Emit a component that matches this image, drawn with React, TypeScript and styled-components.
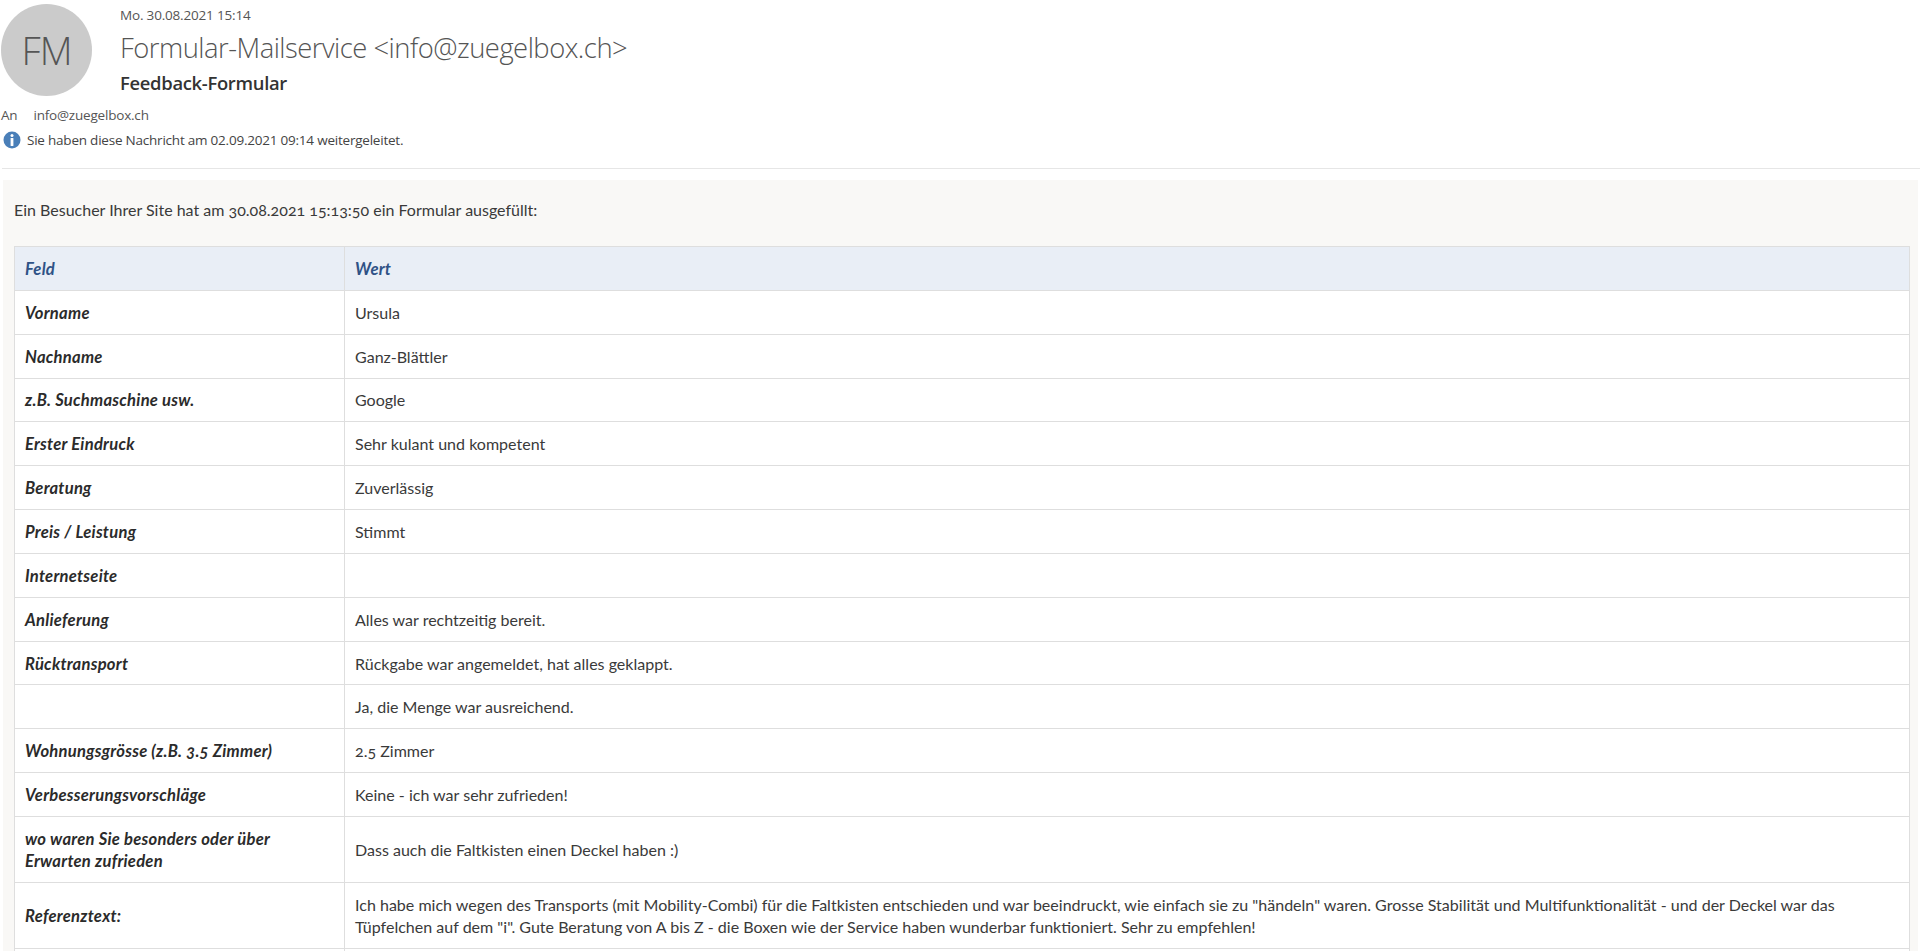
import React from "react";
import styled, { createGlobalStyle } from "styled-components";

const Global = createGlobalStyle`
  html, body { margin: 0; padding: 0; height: 100%; overflow: hidden; background: #fff; }
  #root { height: 100%; }
`;

const Page = styled.div`
  height: 951px;
  overflow: hidden;
  font-family: "Lato", "Open Sans", sans-serif;
  color: #3a3a3a;
  background: #fff;
`;

const Header = styled.header`
  display: flex;
  gap: 28px;
  padding: 4px 0 0 1px;
  height: 96px;
  box-sizing: border-box;
`;

const Avatar = styled.div`
  width: 91px;
  height: 92px;
  border-radius: 50%;
  background: #cbcbcb;
  color: #555;
  display: flex;
  align-items: center;
  justify-content: center;
  font: 300 38px "Open Sans", sans-serif;
  letter-spacing: -1px;
`;

const HeaderText = styled.div`
  display: flex;
  flex-direction: column;
`;

const DateLine = styled.div`
  font: 400 13.5px/22px "Open Sans", sans-serif;
  letter-spacing: -0.18px;
  color: #555;
`;

const Sender = styled.div`
  font: 300 27.4px/36px "Open Sans", sans-serif;
  letter-spacing: -0.5px;
  color: #555;
  margin-top: 4px;
`;

const Subject = styled.div`
  font: 600 18.4px/24px "Open Sans", sans-serif;
  letter-spacing: -0.3px;
  color: #333;
  margin-top: 5px;
`;

const Recipient = styled.div`
  display: flex;
  gap: 16px;
  padding-left: 1px;
  font: 400 13.5px/20px "Open Sans", sans-serif;
  letter-spacing: -0.2px;
  color: #555;
  margin-top: 9px;
`;

const Notice = styled.div`
  display: flex;
  align-items: center;
  gap: 6px;
  padding-left: 3px;
  margin-top: 5px;
  font: 400 13.5px/20px "Open Sans", sans-serif;
  letter-spacing: -0.22px;
  color: #444;
`;

const Divider = styled.hr`
  margin: 18px 0 0 2px;
  border: 0;
  height: 1px;
  background: #e6e6e6;
`;

const Panel = styled.section`
  margin: 11px 2px 0 3px;
  padding: 19px 8px 0 11px;
  background: #f9f8f6;
  height: 800px;
  box-sizing: border-box;
`;

const Intro = styled.p`
  margin: 0 0 26px;
  font-size: 16px;
  line-height: 21px;
  font-feature-settings: "onum";
`;

const Table = styled.div`
  display: grid;
  grid-template-columns: 330px 1fr;
  border-top: 1px solid #dedede;
  border-left: 1px solid #dedede;
  background: #fff;
  line-height: 22px;
  font-feature-settings: "onum";
`;

const Cell = styled.div<{ $head?: boolean; $label?: boolean; $tall?: boolean }>`
  display: flex;
  align-items: center;
  padding: 1px 10px 0;
  height: ${(p) => (p.$tall ? 66 : 43.85)}px;
  box-sizing: border-box;
  border-right: 1px solid #dedede;
  border-bottom: 1px solid #dedede;
  font-size: ${(p) => (p.$label || p.$head ? 16.6 : 16.04)}px;
  letter-spacing: ${(p) => (p.$label || p.$head ? 0.25 : 0)}px;
  font-weight: ${(p) => (p.$label || p.$head ? 700 : 400)};
  font-style: ${(p) => (p.$label || p.$head ? "italic" : "normal")};
  color: ${(p) => (p.$head ? "#2f5286" : p.$label ? "#2b2b2b" : "#3a3a3a")};
  background: ${(p) => (p.$head ? "#e9eef6" : "#fff")};
`;

const InfoIcon = () => (
  <svg width="18" height="18" viewBox="0 0 18 18" aria-hidden="true">
    <circle cx="9" cy="9" r="8.5" fill="#4a7fb8" />
    <circle cx="9" cy="4.6" r="1.5" fill="#fff" />
    <rect x="7.6" y="7" width="2.8" height="8" rx="0.6" fill="#fff" />
  </svg>
);

type Row = { label: React.ReactNode; value: React.ReactNode; tall?: boolean };

const rows: Row[] = [
  { label: "Vorname", value: "Ursula" },
  { label: "Nachname", value: "Ganz-Blättler" },
  { label: "z.B. Suchmaschine usw.", value: "Google" },
  { label: "Erster Eindruck", value: "Sehr kulant und kompetent" },
  { label: "Beratung", value: "Zuverlässig" },
  { label: "Preis / Leistung", value: "Stimmt" },
  { label: "Internetseite", value: "" },
  { label: "Anlieferung", value: "Alles war rechtzeitig bereit." },
  { label: "Rücktransport", value: "Rückgabe war angemeldet, hat alles geklappt." },
  { label: "", value: "Ja, die Menge war ausreichend." },
  { label: "Wohnungsgrösse (z.B. 3.5 Zimmer)", value: "2.5 Zimmer" },
  { label: "Verbesserungsvorschläge", value: "Keine - ich war sehr zufrieden!" },
  {
    label: (
      <span>
        wo waren Sie besonders oder über
        <br />
        Erwarten zufrieden
      </span>
    ),
    value: "Dass auch die Faltkisten einen Deckel haben :)",
    tall: true,
  },
  {
    label: "Referenztext:",
    value: (
      <span>
        Ich habe mich wegen des Transports (mit Mobility-Combi) für die Faltkisten entschieden und war beeindruckt, wie einfach sie zu "händeln" waren. Grosse Stabilität und Multifunktionalität - und der Deckel war das
        <br />
        Tüpfelchen auf dem "i". Gute Beratung von A bis Z - die Boxen wie der Service haben wunderbar funktioniert. Sehr zu empfehlen!
      </span>
    ),
    tall: true,
  },
];

export default function App() {
  return (
    <Page>
      <Global />
      <Header>
        <Avatar>FM</Avatar>
        <HeaderText>
          <DateLine>Mo. 30.08.2021 15:14</DateLine>
          <Sender>Formular-Mailservice &lt;info@zuegelbox.ch&gt;</Sender>
          <Subject>Feedback-Formular</Subject>
        </HeaderText>
      </Header>
      <Recipient>
        <span>An</span>
        <span>info@zuegelbox.ch</span>
      </Recipient>
      <Notice>
        <InfoIcon />
        <span>Sie haben diese Nachricht am 02.09.2021 09:14 weitergeleitet.</span>
      </Notice>
      <Divider />
      <Panel>
        <Intro>Ein Besucher Ihrer Site hat am 30.08.2021 15:13:50 ein Formular ausgefüllt:</Intro>
        <Table>
          <Cell $head>Feld</Cell>
          <Cell $head>Wert</Cell>
          {rows.map((r, i) => (
            <React.Fragment key={i}>
              <Cell $label $tall={r.tall}>{r.label}</Cell>
              <Cell $tall={r.tall}>{r.value}</Cell>
            </React.Fragment>
          ))}
          <Cell $label />
          <Cell />
        </Table>
      </Panel>
    </Page>
  );
}
